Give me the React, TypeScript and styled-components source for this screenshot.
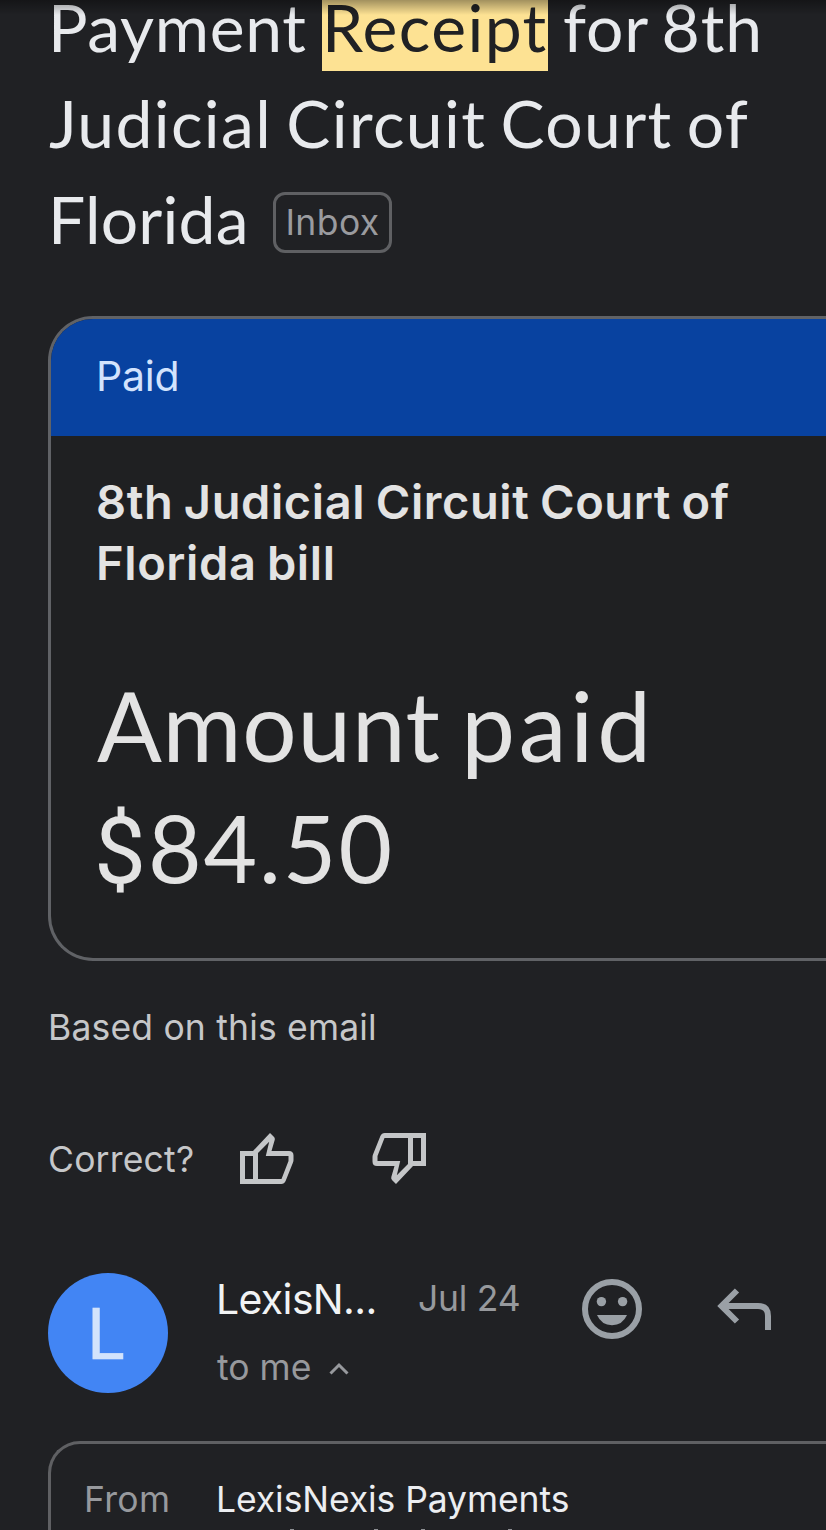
import React from "react";
import styled, { createGlobalStyle } from "styled-components";

const GlobalStyle = createGlobalStyle`
  * { box-sizing: border-box; }
  html, body { margin: 0; background: #202124; }
`;

const display = `"Lato", "Open Sans", sans-serif`;
const text = `"Inter", "Liberation Sans", sans-serif`;

const Screen = styled.main`
  position: relative;
  display: flex;
  flex-direction: column;
  width: 826px;
  height: 1530px;
  overflow: hidden;
  padding-left: 48px;
  background: #202124;
  font-family: ${text};
  color: #e8eaed;
`;

const TopShade = styled.div`
  position: absolute;
  inset: 0 0 auto 0;
  height: 15px;
  background: linear-gradient(rgba(0, 0, 0, 0.36), rgba(0, 0, 0, 0));
`;

const Subject = styled.h1`
  flex: none;
  margin: -21px 0 0;
  font: 400 66px/96px ${display};
  white-space: nowrap;
`;

const SubjectLine = styled.div<{ $spacing?: number; $indent?: number }>`
  display: flex;
  align-items: center;
  height: 96px;
  padding-left: ${(p) => p.$indent ?? 0}px;
  letter-spacing: ${(p) => p.$spacing ?? 0.8}px;
  word-spacing: -4px;
`;

const Word = styled.span<{ $width?: number; $gap?: number; $spacing?: number }>`
  width: ${(p) => (p.$width ? `${p.$width}px` : "auto")};
  margin-left: ${(p) => p.$gap ?? 0}px;
  letter-spacing: ${(p) => p.$spacing ?? 0.8}px;
`;

const Highlight = styled.mark`
  width: 226px;
  height: 92px;
  margin-bottom: 4px;
  line-height: 96px;
  background: #fde293;
  color: #202124;
  letter-spacing: 1.4px;
`;

const LabelChip = styled.span`
  display: flex;
  align-items: center;
  justify-content: center;
  width: 119px;
  height: 61px;
  margin-top: 7px;
  border: 3px solid #5f6063;
  border-radius: 12px;
  font: 400 35.5px/1 ${text};
  letter-spacing: 0.4px;
  color: #9a9b9f;
`;

const BillCard = styled.section`
  flex: none;
  height: 645px;
  margin-top: 49px;
  overflow: hidden;
  border: 3px solid #606266;
  border-right: 0;
  border-radius: 45px 0 0 45px;
  background: #1f2022;
`;

const BillStatus = styled.div`
  display: flex;
  align-items: center;
  height: 117px;
  padding: 0 0 3px 45px;
  background: #0842a0;
  color: #d3e3fd;
  font-size: 41px;
  letter-spacing: -0.2px;
`;

const BillBody = styled.div`
  padding: 35px 0 0 46px;
  color: #e3e3e3;
`;

const BillTitle = styled.h2`
  margin: 0 0 0 -1px;
  font: 600 47px/61px ${text};
  letter-spacing: 0.6px;
  word-spacing: -2px;
  white-space: nowrap;
`;

const BillAmount = styled.div`
  margin-top: 71px;
  font: 400 96px/122px ${display};
  letter-spacing: 0.8px;
  word-spacing: -5px;
  white-space: nowrap;
`;

const AmountWord = styled.span`
  letter-spacing: 3.8px;
`;

const Digits = styled.div`
  margin-left: -3px;
  font-size: 92.5px;
  line-height: 124px;
  letter-spacing: 1.9px;
`;

const Currency = styled.span`
  font-family: "Roboto", sans-serif;
  letter-spacing: 2px;
`;

const Note = styled.p`
  flex: none;
  margin: 45px 0 0;
  font-size: 35.5px;
  line-height: 44px;
  letter-spacing: 0.18px;
  color: #c6c7c9;
`;

const Feedback = styled.div`
  display: flex;
  flex: none;
  align-items: center;
  height: 60px;
  margin-top: 79px;
  font-size: 35.5px;
  letter-spacing: 0.2px;
  color: #c6c7c9;
`;

const FeedbackIcon = styled.svg<{ $gap: number }>`
  width: 54px;
  height: 52px;
  margin-left: ${(p) => p.$gap}px;
  fill: #c4c6c8;
`;

const Message = styled.div`
  display: flex;
  flex: none;
  height: 120px;
  margin-top: 84px;
`;

const Avatar = styled.div`
  display: flex;
  align-items: center;
  justify-content: center;
  width: 120px;
  height: 120px;
  padding: 1px 3px 0 0;
  border-radius: 50%;
  background: #4285f4;
  color: #d2e3fc;
  font-size: 70px;
  font-weight: 400;
  -webkit-text-stroke: 0.5px #d2e3fc;
`;

const Sender = styled.div`
  width: 202px;
  padding-left: 48px;
  white-space: nowrap;
`;

const SenderName = styled.div`
  height: 51px;
  padding-top: 1px;
  font-size: 41px;
  line-height: 50px;
  letter-spacing: -0.65px;
  color: #f1f3f4;
`;

const Recipient = styled.div`
  display: flex;
  align-items: center;
  height: 44px;
  margin: 21px 0 0 1px;
  font-size: 35.5px;
  color: #97999d;
`;

const Chevron = styled.svg`
  width: 22px;
  height: 14px;
  margin: 4px 0 0 17px;
`;

const Sent = styled.time`
  width: 164px;
  padding-left: 48px;
  font-size: 35.5px;
  line-height: 52px;
  letter-spacing: -0.25px;
  white-space: nowrap;
  color: #97999d;
`;

const ActionIcon = styled.svg<{ $gap: number }>`
  flex: none;
  width: 60px;
  height: 60px;
  margin: 6px 0 0 ${(p) => p.$gap}px;
  color: #9aa0a6;
`;

const Details = styled.section`
  flex: none;
  height: 120px;
  margin-top: 48px;
  padding: 32px 0 0 33px;
  border: 3px solid #5f6063;
  border-right: 0;
  border-radius: 32px 0 0 0;
`;

const DetailRow = styled.div`
  display: flex;
  align-items: center;
  height: 46px;
  font-size: 35.5px;
  white-space: nowrap;
`;

const DetailLabel = styled.span`
  width: 132px;
  color: #97999d;
  letter-spacing: 0.3px;
`;

const DetailValue = styled.span`
  padding-top: 1px;
  letter-spacing: -0.08px;
  color: #eceef1;
`;

const NextLine = styled.svg`
  display: block;
  width: 360px;
  height: 6px;
  margin: 6px 0 0 132px;
  fill: #8e9094;
`;

const thumb =
  "M0 18H13L30 0L33.8 3.8Q35.2 5.2 34.7 7L31.5 18H49Q53.5 18 53.5 22.5V27Q53.5 28.3 53 29.5L45.6 48Q44.3 51 41.3 51H0ZM5 23V46H13V23ZM18 20V46H41.5L48.5 28V23H25.8L29.2 8.8Z";

export default function App() {
  return (
    <>
      <GlobalStyle />
      <Screen>
        <Subject>
          <SubjectLine>
            <Word $width={274} $spacing={0.7}>Payment</Word>
            <Highlight>Receipt</Highlight>
            <Word $gap={15} $spacing={0.9}>for 8th</Word>
          </SubjectLine>
          <SubjectLine $indent={1} $spacing={1.35}>Judicial Circuit Court of</SubjectLine>
          <SubjectLine>
            <Word $width={225} $spacing={0.2}>Florida</Word>
            <LabelChip>Inbox</LabelChip>
          </SubjectLine>
        </Subject>

        <BillCard>
          <BillStatus>Paid</BillStatus>
          <BillBody>
            <BillTitle>
              8th Judicial Circuit Court of
              <br />
              Florida bill
            </BillTitle>
            <BillAmount>
              Amount <AmountWord>paid</AmountWord>
              <Digits>
                <Currency>$</Currency>84.50
              </Digits>
            </BillAmount>
          </BillBody>
        </BillCard>

        <Note>Based on this email</Note>

        <Feedback>
          Correct?
          <FeedbackIcon $gap={46} viewBox="0 0 54 52">
            <path fillRule="evenodd" d={thumb} />
          </FeedbackIcon>
          <FeedbackIcon $gap={77.5} viewBox="0 0 54 52">
            <path fillRule="evenodd" d={thumb} transform="rotate(180 27 25.5)" />
          </FeedbackIcon>
        </Feedback>

        <Message>
          <Avatar>L</Avatar>
          <Sender>
            <SenderName>LexisN...</SenderName>
            <Recipient>
              to me
              <Chevron viewBox="0 0 22 14">
                <path d="M2.5 11.5L11 3L19.5 11.5" fill="none" stroke="#97999d" strokeWidth="3" />
              </Chevron>
            </Recipient>
          </Sender>
          <Sent>Jul 24</Sent>
          <ActionIcon $gap={48} viewBox="0 0 60 60">
            <circle cx="30" cy="30" r="27" fill="none" stroke="currentColor" strokeWidth="6" />
            <circle cx="19.4" cy="22.6" r="4.7" fill="currentColor" />
            <circle cx="40.6" cy="22.6" r="4.7" fill="currentColor" />
            <path d="M15 36H45Q40.5 46.2 30 46.2T15 36Z" fill="currentColor" />
          </ActionIcon>
          <ActionIcon $gap={72} viewBox="0 0 60 60">
            <path
              d="M23 11.5L7.5 27L23 42.5M7.5 27H44Q54 27 54 37V51"
              fill="none"
              stroke="currentColor"
              strokeWidth="6"
            />
          </ActionIcon>
        </Message>

        <Details>
          <DetailRow>
            <DetailLabel>From</DetailLabel>
            <DetailValue>LexisNexis Payments</DetailValue>
          </DetailRow>
          <NextLine viewBox="0 0 360 6">
            <path d="M74 1h4v5h-4ZM158 1h4v5h-4ZM205 1h4v5h-4ZM292 1h4v5h-4Z" />
          </NextLine>
        </Details>
        <TopShade />
      </Screen>
    </>
  );
}
